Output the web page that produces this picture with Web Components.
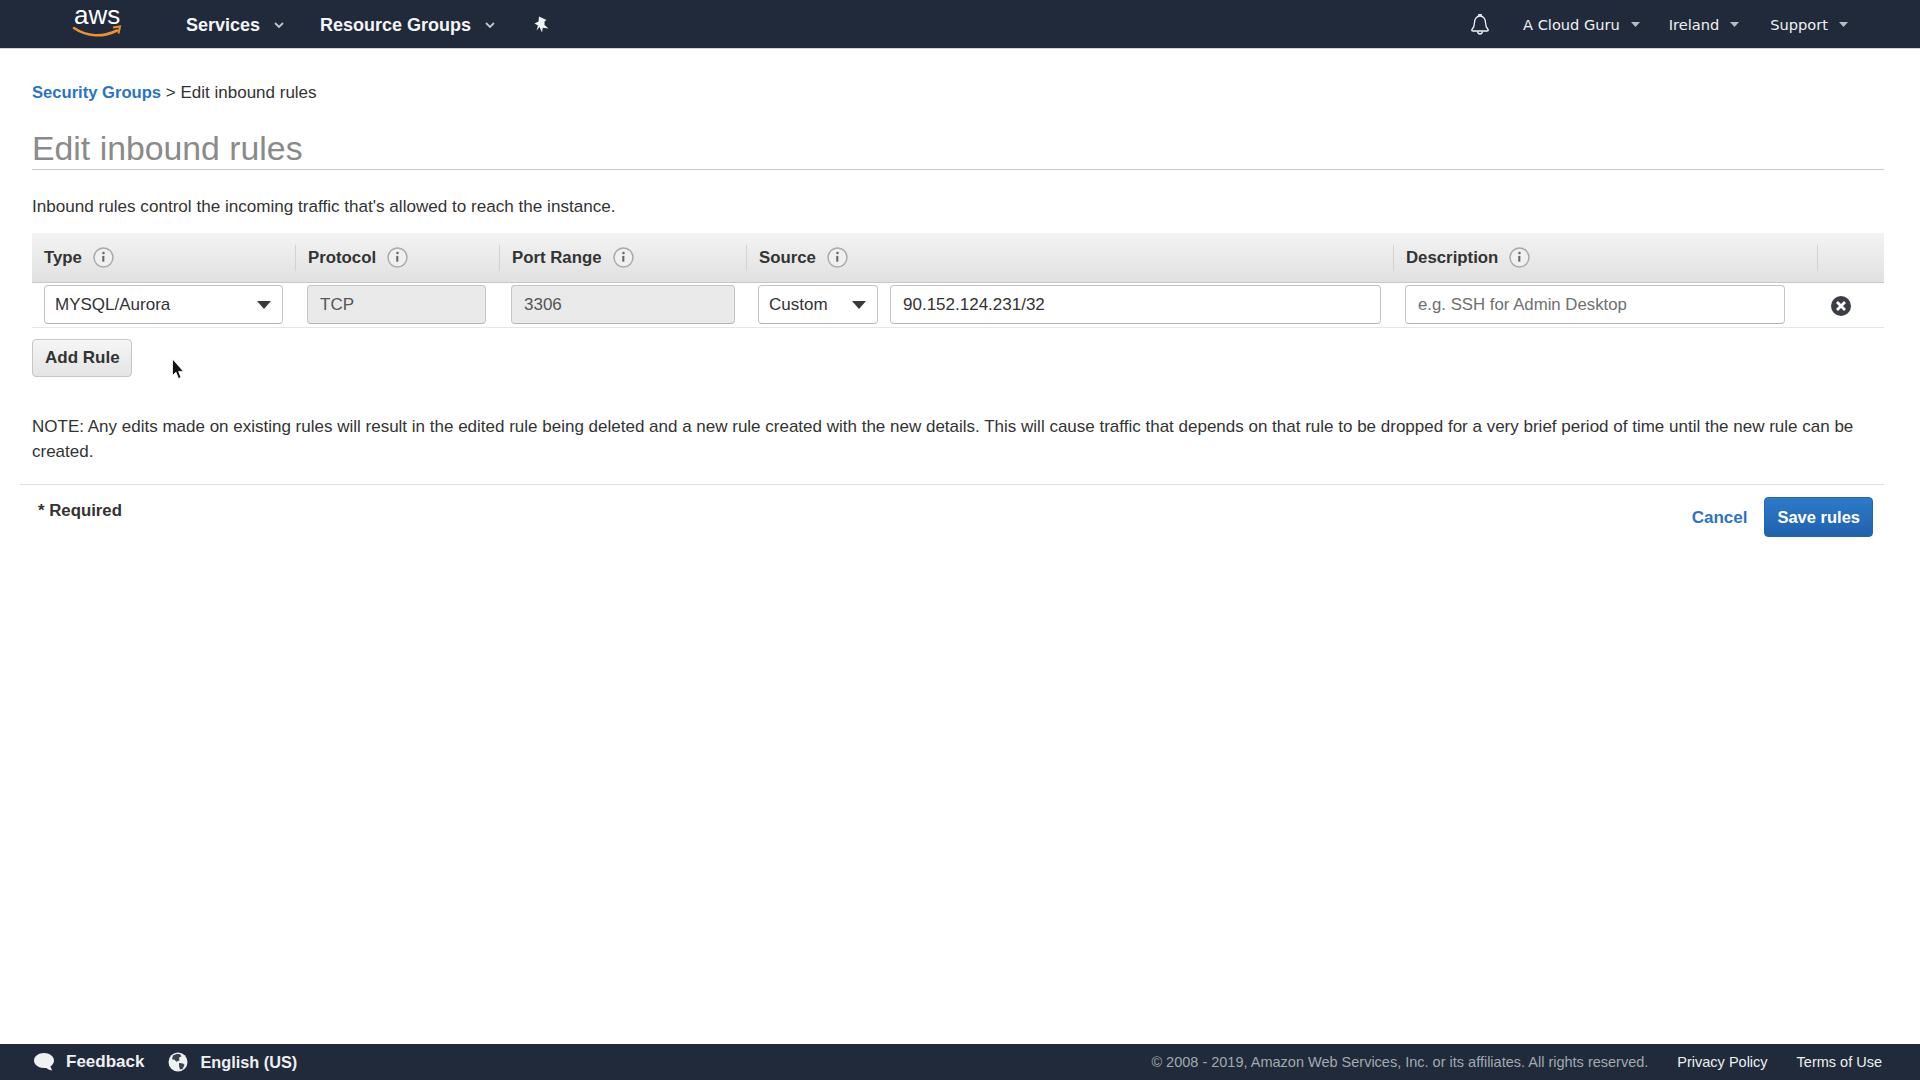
<!DOCTYPE html>
<html>
<head>
<meta charset="utf-8">
<title>Edit inbound rules</title>
<style>
    html, body{ margin: 0; height: 100%; }
    body{
        display: flex;
        flex-direction: column;
        background: #fff;
        color: #333;
        font-family: "Liberation Sans", Arial, sans-serif;
        font-size: 17px;
    }
    aws-page{ flex: 1; }
    p{
        margin: 28px 0 17px;
        line-height: 18px;
        font-size: 17.100px;
        color: #333;
    }
</style>
</head>
<body>
<aws-nav></aws-nav>
<aws-page>
    <aws-crumbs></aws-crumbs>
    <page-title>Edit inbound rules</page-title>
    <p>Inbound rules control the incoming traffic that's allowed to reach the instance.</p>
    <rule-table></rule-table>
    <page-note></page-note>
    <form-actions></form-actions>
</aws-page>
<aws-footer></aws-footer>

<script>
const caret = `<svg width="10" height="6" viewBox="0 0 10 6"><path d="M1 1l4 4 4-4" fill="none" stroke="currentColor" stroke-width="1.8"/></svg>`;
const smallCaret = `<svg class="c" width="9" height="5" viewBox="0 0 10 5" preserveAspectRatio="none"><path d="M0 0h10L5 5z" fill="currentColor"/></svg>`;

class AwsNav extends HTMLElement{
    constructor(){
        super();
        this.attachShadow({mode : 'open'});
        this.shadowRoot.innerHTML = `
        <style>
            :host{
                display: flex;
                align-items: center;
                height: 49px;
                flex: none;
                background: #202a3a;
                color: #fff;
                padding: 0 72px;
                box-sizing: border-box;
                border-bottom: 1px solid #cfd3d8;
            }
            .logo{
                display: flex;
                flex-direction: column;
                width: 50px;
                padding-bottom: 2px;
                margin-right: 64px;
                flex: none;
            }
            .logo span{
                font-family: "Liberation Sans", Arial, sans-serif;
                font-size: 26px;
                line-height: 20px;
                padding-left: 2px;
                color: #fff;
            }
            .main{
                font-size: 18px;
                font-weight: bold;
                color: #f4f5f6;
                display: flex;
                align-items: center;
                white-space: nowrap;
                padding-top: 2px;
            }
            .main svg{ color: #c3c7cc; margin-left: 14px; }
            .services{ margin-right: 36px; }
            .pin{ margin-left: 38px; flex: none; }
            .right{
                margin-left: auto;
                display: flex;
                align-items: center;
                font-family: "DejaVu Sans", Verdana, sans-serif;
                font-size: 14.6px;
                color: #f0f1f2;
                white-space: nowrap;
            }
            .right span{ display: flex; align-items: center; padding-top: 1px; }
            .right svg.c{ color: #b9bdc3; margin-left: 11px; }
            .bell{ margin-right: 33px; }
            .cloud{ margin-right: 29px; }
            .ireland{ margin-right: 31px; }
        </style>
        <div class="logo">
            <span>aws</span>
            <svg width="50" height="16" viewBox="0 0 50 16">
                <path d="M2 3c13 9 29 9.500 43 2.500" fill="none" stroke="#ec912d" stroke-width="2.600" stroke-linecap="round"/>
                <path d="M41 2.500l7-1-1.500 7" fill="none" stroke="#ec912d" stroke-width="2"/>
            </svg>
        </div>
        <span class="main services">Services${caret}</span>
        <span class="main">Resource Groups${caret}</span>
        <svg class="pin" width="16" height="17" viewBox="0 0 16 17"><path d="M6 0.500L13.500 4 11.500 5.500 11.500 9 15.500 12.500 9.800 11.800 9 16.500 6.500 11 3.500 14.500 5 9.500 1.500 7.500 5.500 5.500z" fill="#f2f3f4"/></svg>
        <div class="right">
            <svg class="bell" width="20" height="22" viewBox="0 0 20 22"><path d="M2 16.500c2-2 2.500-3.500 2.500-7 0-3.500 2.300-6.500 5.500-6.500s5.500 3 5.500 6.500c0 3.500.5 5 2.500 7 .8.800 0 1.500-1 1.500H3c-1 0-1.800-.7-1-1.500z" fill="none" stroke="#f0f1f2" stroke-width="1.300"/><path d="M8.800 3V1.600h2.400V3M7.500 18.500c.3 1.500 1.300 2.500 2.500 2.500s2.200-1 2.500-2.500" fill="none" stroke="#f0f1f2" stroke-width="1.300"/></svg>
            <span class="cloud">A Cloud Guru${smallCaret}</span>
            <span class="ireland">Ireland${smallCaret}</span>
            <span>Support${smallCaret}</span>
        </div>`;
    }
}

class AwsPage extends HTMLElement{
    constructor(){
        super();
        this.attachShadow({mode : 'open'});
        this.shadowRoot.innerHTML = `
        <style>
            :host{ display: block; position: relative; padding: 0 36px 0 32px; }
            .cursor{ position: absolute; left: 171px; top: 309px; }
        </style>
        <slot></slot>
        <svg class="cursor" width="14" height="22" viewBox="0 0 14 22">
            <path d="M1.500 1V17.500L5 14.200 7.500 20.500 10 19.500 7.600 13.400H12.500z" fill="#111" stroke="#fff" stroke-width="0.800"/>
        </svg>`;
    }
}

class AwsCrumbs extends HTMLElement{
    constructor(){
        super();
        this.attachShadow({mode : 'open'});
        this.shadowRoot.innerHTML = `
        <style>
            :host{ display: block; padding-top: 35px; line-height: 18px; color: #333; }
            a{ color: #2b74c5; font-weight: bold; font-size: 16.600px; text-decoration: none; }
        </style>
        <a href="#">Security Groups</a> &gt; Edit inbound rules`;
    }
}

class PageTitle extends HTMLElement{
    constructor(){
        super();
        this.attachShadow({mode : 'open'});
        this.shadowRoot.innerHTML = `
        <style>
            :host{
                display: block;
                margin-top: 27px;
                font-size: 33.800px;
                line-height: 38px;
                padding-bottom: 2px;
                color: #8a8a8a;
                border-bottom: 1px solid #c9c9c9;
            }
        </style>
        <slot></slot>`;
    }
}

class InfoIcon extends HTMLElement{
    constructor(){
        super();
        this.attachShadow({mode : 'open'});
        this.shadowRoot.innerHTML = `
        <style>
            :host{ display: inline-flex; margin-left: 11px; }
        </style>
        <svg width="21" height="21" viewBox="0 0 20 20">
            <circle cx="10" cy="10" r="9" fill="#f0f0f0" stroke="#a9a9a9" stroke-width="1.400"/>
            <circle cx="10" cy="5.800" r="1.200" fill="#666"/>
            <path d="M8.800 8.500H10.800V14H8.800z" fill="#666"/>
        </svg>`;
    }
}

class RuleField extends HTMLElement{
    constructor(){
        super();
        this.attachShadow({mode : 'open'});
        this.shadowRoot.innerHTML = `
        <style>
            :host{
                display: flex;
                align-items: center;
                justify-content: space-between;
                box-sizing: border-box;
                height: 39px;
                padding: 1px 11px 0 10px;
                background: #fff;
                border: 1px solid #c4c4c4;
                border-bottom-color: #b4b4b4;
                border-radius: 4px;
                color: #333;
                white-space: nowrap;
            }
            :host([disabled]){ background: #eaeaea; color: #555; padding-left: 12px; }
            :host([text]){ padding-left: 12px; }
            :host([placeholder]){ color: #707070; padding-left: 12px; font-size: 16.800px; }
            svg{ display: none; }
            :host([select]) svg{ display: block; flex: none; }
        </style>
        <slot></slot>
        <svg width="14" height="8" viewBox="0 0 14 8"><path d="M0 0h14L7 8z" fill="#3a3a3a"/></svg>`;
    }
}

class RuleTable extends HTMLElement{
    constructor(){
        super();
        this.attachShadow({mode : 'open'});
        this.shadowRoot.innerHTML = `
        <style>
            :host{ display: block; }
            .head, .row{ display: grid; }
            .head{
                grid-template-columns: 264px 204px 247px 647px 424px 65px;
                height: 50px;
                background: linear-gradient(#f3f3f3, #e1e1e1);
                border-bottom: 1px solid #c8c8c8;
                box-sizing: border-box;
                align-items: center;
                font-weight: bold;
                font-size: 16.800px;
                color: #333;
            }
            .head div{
                display: flex;
                align-items: center;
                height: 26px;
                padding-left: 12px;
                border-right: 1px solid #d2d2d2;
            }
            .head div:last-child{ border-right: none; }
            .row{
                grid-template-columns: 263px 203px 248px 647px 424px 66px;
                padding: 2px 0 3px;
                border-bottom: 1px solid #e6e6e6;
                align-items: center;
            }
            .cell{ padding: 0 12px; }
            .source{ display: grid; grid-template-columns: 120px 1fr; gap: 12px; }
            .desc{ padding-right: 32px; }
            .remove{ display: block; margin: 2px 0 0 13px; }
            .add{ margin-top: 11px; padding-right: 11px; }
        </style>
        <div class="head">
            <div>Type<info-icon></info-icon></div>
            <div>Protocol<info-icon></info-icon></div>
            <div>Port Range<info-icon></info-icon></div>
            <div>Source<info-icon></info-icon></div>
            <div>Description<info-icon></info-icon></div>
            <div></div>
        </div>
        <div class="row">
            <div class="cell"><rule-field select>MYSQL/Aurora</rule-field></div>
            <div class="cell"><rule-field disabled>TCP</rule-field></div>
            <div class="cell" style="padding-left:13px;padding-right:11px"><rule-field disabled>3306</rule-field></div>
            <div class="cell source">
                <rule-field select>Custom</rule-field>
                <rule-field text>90.152.124.231/32</rule-field>
            </div>
            <div class="cell desc"><rule-field placeholder>e.g. SSH for Admin Desktop</rule-field></div>
            <svg class="remove" width="22" height="22" viewBox="0 0 22 22">
                <circle cx="11" cy="11" r="10" fill="#3b3f45"/>
                <path d="M7 7l8 8M15 7l-8 8" stroke="#fff" stroke-width="2.800"/>
            </svg>
        </div>
        <aws-button class="add">Add Rule</aws-button>`;
    }
}

class AwsButton extends HTMLElement{
    constructor(){
        super();
        this.attachShadow({mode : 'open'});
        this.shadowRoot.innerHTML = `
        <style>
            :host{
                display: inline-flex;
                align-items: center;
                height: 38px;
                padding: 0 12px;
                box-sizing: border-box;
                border: 1px solid #c6c6c6;
                border-radius: 4px;
                background: linear-gradient(#f6f6f6, #e4e4e4);
                font-weight: bold;
                color: #333;
                white-space: nowrap;
            }
            :host([primary]){
                height: 40px;
                font-size: 16.500px;
                background: linear-gradient(#2d7ac9, #1f62ad);
                border-color: #2367b3;
                color: #fff;
            }
        </style>
        <slot></slot>`;
    }
}

class PageNote extends HTMLElement{
    constructor(){
        super();
        this.attachShadow({mode : 'open'});
        this.shadowRoot.innerHTML = `
        <style>
            :host{ display: block; margin-top: 37px; line-height: 25px; color: #333; padding-right: 28px; }
        </style>
        NOTE: Any edits made on existing rules will result in the edited rule being deleted and a new rule created with the new details. This will cause traffic that depends on that rule to be dropped for a very brief period of time until the new rule can be created.`;
    }
}

class FormActions extends HTMLElement{
    constructor(){
        super();
        this.attachShadow({mode : 'open'});
        this.shadowRoot.innerHTML = `
        <style>
            :host{
                display: flex;
                align-items: flex-start;
                margin: 20px 0 0 -12px;
                padding: 12px 11px 0 18px;
                border-top: 1px solid #dedede;
            }
            b{ line-height: 27px; color: #333; font-size: 16.800px; }
            a{
                margin-left: auto;
                margin-right: 17px;
                line-height: 41px;
                color: #2b74c5;
                font-weight: bold;
                text-decoration: none;
            }
        </style>
        <b>* Required</b>
        <a href="#">Cancel</a>
        <aws-button primary>Save rules</aws-button>`;
    }
}

class AwsFooter extends HTMLElement{
    constructor(){
        super();
        this.attachShadow({mode : 'open'});
        this.shadowRoot.innerHTML = `
        <style>
            :host{
                display: flex;
                align-items: center;
                flex: none;
                height: 36px;
                padding: 0 38px 0 33px;
                background: #202a3a;
                white-space: nowrap;
            }
            .left{ display: flex; align-items: center; font-weight: bold; color: #eef0f2; }
            .left svg{ margin-right: 11px; flex: none; }
            .feedback{ margin-right: 24px; }
            .lang{ font-size: 16.300px; margin-left: 1px; }
            .right{ margin-left: auto; font-size: 14.500px; display: flex; }
            .copy{ color: #a3a9b1; margin-right: 29px; }
            .link{ color: #eef0f2; margin-right: 29px; }
            .link:last-child{ margin-right: 0; }
        </style>
        <div class="left">
            <svg width="22" height="20" viewBox="0 0 22 20"><path d="M11 1c5.500 0 10 3.300 10 7.600 0 2.400-1.400 4.400-3.500 5.800.2 1.500 1 2.900 2 3.800-2.400 0-4.500-.9-6-2.300-.8.100-1.600.2-2.500.2C5.500 16.100 1 12.800 1 8.600 1 4.300 5.500 1 11 1z" fill="#eef0f2"/></svg>
            <span class="feedback">Feedback</span>
            <svg width="20" height="20" viewBox="0 0 20 20"><circle cx="10" cy="10" r="9.500" fill="#eef0f2"/><path d="M5 3.500c2-1.500 5-2 7-1.200l1.500 2-2.500 1.500.5 2.500-3 1.500-2-2-2.500-.5zM11 11l4 .5 1.500 1.500-2 4-2.500 .5-1-3.500z" fill="#3a4350"/></svg>
            <span class="lang">English (US)</span>
        </div>
        <div class="right">
            <span class="copy">© 2008 - 2019, Amazon Web Services, Inc. or its affiliates. All rights reserved.</span>
            <span class="link">Privacy Policy</span>
            <span class="link">Terms of Use</span>
        </div>`;
    }
}

window.customElements.define('aws-nav',AwsNav);
window.customElements.define('aws-page',AwsPage);
window.customElements.define('aws-crumbs',AwsCrumbs);
window.customElements.define('page-title',PageTitle);
window.customElements.define('info-icon',InfoIcon);
window.customElements.define('rule-field',RuleField);
window.customElements.define('aws-button',AwsButton);
window.customElements.define('rule-table',RuleTable);
window.customElements.define('page-note',PageNote);
window.customElements.define('form-actions',FormActions);
window.customElements.define('aws-footer',AwsFooter);
</script>
</body>
</html>
